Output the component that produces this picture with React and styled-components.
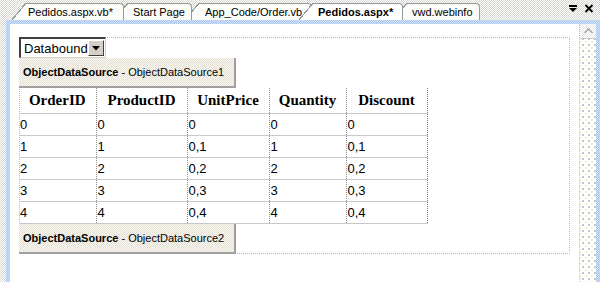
import styled, { createGlobalStyle } from "styled-components";

const GlobalStyle = createGlobalStyle`
    html, body {
        margin: 0;
        padding: 0;
        width: 600px;
        height: 282px;
        overflow: hidden;
        background: #fff;
    }
    body {
        font-family: "Liberation Sans", Arial, sans-serif;
    }
`

const checker = (a, b) => `repeating-conic-gradient(${a} 0 25%, ${b} 0 50%) 0 0 / 2px 2px`;

const Window = styled.div`
    width: 600px;
    height: 282px;
    display: flex;
    flex-direction: column;
    background: ${checker("#d8d6d0", "#ffffff")};
`

const TabStrip = styled.div`
    height: 20px;
    flex-shrink: 0;
    display: flex;
    align-items: flex-end;
    padding-left: 25px;
    position: relative;
`

const Tab = styled.div`
    position: relative;
    box-sizing: border-box;
    height: 17px;
    width: ${p => p.$w}px;
    margin-left: ${p => p.$ml || 0}px;
    padding-left: ${p => p.$pl || 3}px;
    display: flex;
    align-items: center;
    font-size: 11px;
    font-weight: ${p => (p.$active ? 700 : 400)};
    color: #000;
    background: ${p => (p.$active ? "#ffffff" : "#fbfbf8")};
    border-top: 1px solid #919b9c;
    border-right: 1px solid #919b9c;
    border-top-right-radius: 4px;
    z-index: ${p => (p.$active ? 5 : 4 - (p.$i || 0))};
    white-space: nowrap;
    &::before {
        content: "";
        position: absolute;
        left: -13px;
        top: -1px;
        bottom: 0;
        width: 14px;
        background: linear-gradient(
            to bottom right,
            transparent calc(50% - 0.6px),
            #919b9c calc(50% - 0.6px),
            #919b9c calc(50% + 0.6px),
            ${p => (p.$active ? "#ffffff" : "#fbfbf8")} calc(50% + 0.6px)
        );
    }
`

const Controls = styled.div`
    position: absolute;
    right: 6px;
    top: 3px;
    display: flex;
    gap: 6px;
    font-size: 11px;
    font-weight: 700;
    color: #000;
`

const Frame = styled.div`
    flex: 1;
    margin-left: 6px;
    display: flex;
    padding: 4px 4px 0 4px;
    background: ${checker("#a9c6ee", "#d2e2f8")};
`

const Surface = styled.div`
    flex: 1;
    background: #fff;
    padding: 13px 0 0 9px;
    display: flex;
    align-items: flex-start;
`

const DesignArea = styled.div`
    position: relative;
    width: 551px;
    height: 217px;
    &::before {
        content: "";
        position: absolute;
        inset: 0;
        border: 1px dotted #b8b8b8;
    }
`

const Content = styled.div`
    position: relative;
    display: flex;
    flex-direction: column;
    align-items: flex-start;
`

const Select = styled.div`
    box-sizing: border-box;
    width: 87px;
    height: 21px;
    display: flex;
    align-items: center;
    justify-content: space-between;
    padding: 0 1px 0 3px;
    font-size: 13px;
    background: #fff;
    border-top: 2px solid #404040;
    border-left: 2px solid #404040;
    border-right: 1px solid #d4d0c8;
    border-bottom: 1px solid #d4d0c8;
`

const SelectButton = styled.div`
    box-sizing: border-box;
    width: 16px;
    height: 16px;
    background: #d4d0c8;
    border: 1px solid;
    border-color: #fff #404040 #404040 #fff;
    display: flex;
    align-items: center;
    justify-content: center;
`

const SourceBox = styled.div`
    box-sizing: border-box;
    width: 217px;
    height: 30px;
    display: flex;
    align-items: center;
    padding-left: 4px;
    font-size: 11px;
    background: ${checker("#e4e1d4", "#f8f7f2")};
    border-right: 2px solid #a0a0a0;
    border-bottom: 2px solid #a0a0a0;
    white-space: pre;
    b {
        font-weight: 700;
    }
`

const Grid = styled.table`
    border-collapse: collapse;
    table-layout: fixed;
    width: 408px;
    border-right: 1px dotted #808080;
    border-bottom: 1px dotted #8a8a40;
`

const HeadCell = styled.th`
    height: 25px;
    padding: 0;
    font-family: "Liberation Serif", "Times New Roman", serif;
    font-size: 15px;
    font-weight: 700;
    text-align: center;
    border-bottom: 1px solid #c8c8c8;
    border-left: 1px dotted #909090;
    &:first-child {
        border-left: none;
    }
`

const Cell = styled.td`
    height: 21px;
    padding: 0 0 0 1px;
    font-size: 13px;
    text-align: left;
    border-bottom: 1px solid #c8c8c8;
    border-left: 1px dotted #909090;
    &:first-child {
        border-left: none;
    }
`

const ScrollTrack = styled.div`
    width: 16px;
    flex-shrink: 0;
    display: flex;
    flex-direction: column;
    background:
        radial-gradient(circle, #c4c4c4 0.7px, transparent 0.9px) 0 0 / 6px 6px,
        radial-gradient(circle, #f4f0c0 0.7px, transparent 0.9px) 3px 3px / 6px 6px,
        #ffffff;
    border-left: 1px dotted #c0c0c0;
`

const ScrollArrow = styled.div`
    height: 14px;
    display: flex;
    align-items: center;
    justify-content: center;
    border-bottom: 1px solid #c8c8c8;
    background: ${checker("#e8e8e8", "#ffffff")};
`

const tabs = [
    { name: "Pedidos.aspx.vb*", w: 99, pl: 3 },
    { name: "Start Page", w: 65, ml: 3, pl: 6 },
    { name: "App_Code/Order.vb", w: 114, ml: 6, pl: 7 },
    { name: "Pedidos.aspx*", w: 91, ml: 0, pl: 6, active: true },
    { name: "vwd.webinfo", w: 74, ml: 3, pl: 6 },
];

const columns = ["OrderID", "ProductID", "UnitPrice", "Quantity", "Discount"];
const widths = [77, 91, 82, 77, 81];
const rows = [0, 1, 2, 3, 4].map(i => [i, i, i === 0 ? "0" : "0," + i, i, i === 0 ? "0" : "0," + i]);

const App = () => {
    return (
        <>
            <GlobalStyle />
            <Window>
                <TabStrip>
                    {tabs.map((t, i) => (
                        <Tab key={t.name} $w={t.w} $ml={t.ml} $pl={t.pl} $active={t.active} $i={i}>
                            {t.name}
                        </Tab>
                    ))}
                    <Controls>
                        <svg width="10" height="11" viewBox="0 0 10 11">
                            <rect x="1" y="2" width="8" height="2" fill="#000" />
                            <path d="M1 5 H9 L5 9 Z" fill="#000" />
                        </svg>
                        <svg width="10" height="11" viewBox="0 0 10 11">
                            <path d="M1.5 2 L8.5 9 M8.5 2 L1.5 9" stroke="#000" strokeWidth="1.8" />
                        </svg>
                    </Controls>
                </TabStrip>
                <Frame>
                    <Surface>
                        <DesignArea>
                            <Content>
                                <Select>
                                    Databound
                                    <SelectButton>
                                        <svg width="8" height="5" viewBox="0 0 8 5">
                                            <path d="M0 0 H8 L4 4.5 Z" fill="#000" />
                                        </svg>
                                    </SelectButton>
                                </Select>
                                <SourceBox>
                                    <b>ObjectDataSource</b> - ObjectDataSource1
                                </SourceBox>
                                <Grid>
                                    <colgroup>
                                        {widths.map((w, i) => <col key={i} style={{ width: w }} />)}
                                    </colgroup>
                                    <thead>
                                        <tr>
                                            {columns.map(c => <HeadCell key={c}>{c}</HeadCell>)}
                                        </tr>
                                    </thead>
                                    <tbody>
                                        {rows.map((r, i) => (
                                            <tr key={i}>
                                                {r.map((v, j) => <Cell key={j}>{v}</Cell>)}
                                            </tr>
                                        ))}
                                    </tbody>
                                </Grid>
                                <SourceBox>
                                    <b>ObjectDataSource</b> - ObjectDataSource2
                                </SourceBox>
                            </Content>
                        </DesignArea>
                    </Surface>
                    <ScrollTrack>
                        <ScrollArrow>
                            <svg width="9" height="6" viewBox="0 0 9 6">
                                <path d="M0.5 5 L4.5 1 L8.5 5" stroke="#a0a0a0" strokeWidth="1.3" fill="none" />
                            </svg>
                        </ScrollArrow>
                    </ScrollTrack>
                </Frame>
            </Window>
        </>
    );
}

export default App;
